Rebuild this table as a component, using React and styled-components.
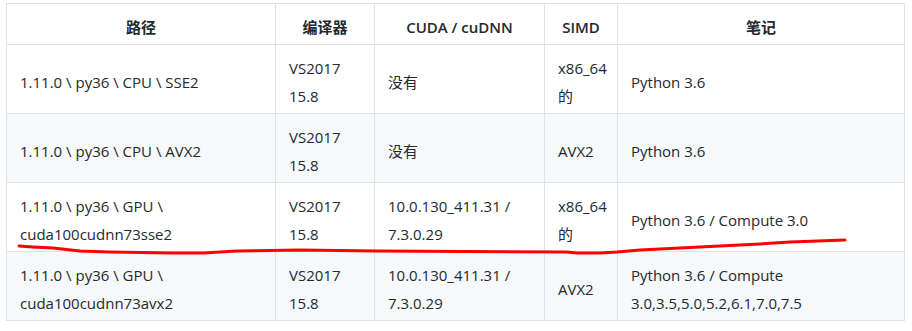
import styled, { createGlobalStyle } from "styled-components";

const GlobalStyle = createGlobalStyle`
  body {
    margin: 0;
    background: #fff;
  }
`;

const StPage = styled.div`
  position: relative;
  padding: 3px 6px;
  font-family: "Open Sans", "Noto Sans CJK SC", sans-serif;
  font-size: 15px;
  color: #24292e;
`;

const StTable = styled.table`
  width: 898px;
  border-collapse: collapse;
  table-layout: fixed;
`;

const StTh = styled.th`
  padding: 9px 13px 3px;
  line-height: 28px;
  border: 1px solid #dfe2e5;
  font-weight: 600;
  text-align: center;
`;

const StRow = styled.tr`
  background-color: ${(props) => (props.$even ? "#f6f8fa" : "#fff")};
`;

const StTd = styled.td`
  padding: 9px 13px 3px;
  line-height: 28px;
  border: 1px solid #dfe2e5;
  vertical-align: middle;
`;

const StMark = styled.svg`
  position: absolute;
  left: 0;
  top: 0;
  pointer-events: none;
`;

const columns = [
  { title: "路径", width: 269 },
  { title: "编译器", width: 99 },
  { title: "CUDA / cuDNN", width: 170 },
  { title: "SIMD", width: 73 },
  { title: "笔记", width: 287 },
];

const rows = [
  [
    ["1.11.0 \\ py36 \\ CPU \\ SSE2"],
    ["VS2017", "15.8"],
    ["没有"],
    ["x86_64", "的"],
    ["Python 3.6"],
  ],
  [
    ["1.11.0 \\ py36 \\ CPU \\ AVX2"],
    ["VS2017", "15.8"],
    ["没有"],
    ["AVX2"],
    ["Python 3.6"],
  ],
  [
    ["1.11.0 \\ py36 \\ GPU \\", "cuda100cudnn73sse2"],
    ["VS2017", "15.8"],
    ["10.0.130_411.31 /", "7.3.0.29"],
    ["x86_64", "的"],
    ["Python 3.6 / Compute 3.0"],
  ],
  [
    ["1.11.0 \\ py36 \\ GPU \\", "cuda100cudnn73avx2"],
    ["VS2017", "15.8"],
    ["10.0.130_411.31 /", "7.3.0.29"],
    ["AVX2"],
    ["Python 3.6 / Compute", "3.0,3.5,5.0,5.2,6.1,7.0,7.5"],
  ],
];

const markPoints =
  "19,246 33,247 53,248 80,251 110,252 172,253 203,253 237,251 300,250 377,251 567,252 577,253 600,253 617,252 640,250 700,247 760,244 790,242 845,240";

function App() {
  return (
    <StPage>
      <GlobalStyle />
      <StTable>
        <colgroup>
          {columns.map((c) => (
            <col key={c.title} style={{ width: c.width }} />
          ))}
        </colgroup>
        <thead>
          <tr>
            {columns.map((c) => (
              <StTh key={c.title}>{c.title}</StTh>
            ))}
          </tr>
        </thead>
        <tbody>
          {rows.map((row, i) => (
            <StRow key={i} $even={i % 2 === 1}>
              {row.map((lines, j) => (
                <StTd key={j}>
                  {lines.map((line, k) => (
                    <div key={k}>{line}</div>
                  ))}
                </StTd>
              ))}
            </StRow>
          ))}
        </tbody>
      </StTable>
      <StMark width="912" height="331">
        <polyline
          points={markPoints}
          fill="none"
          stroke="#ff0000"
          strokeWidth="3"
          strokeLinejoin="round"
          strokeLinecap="round"
        />
      </StMark>
    </StPage>
  );
}

export default App;
